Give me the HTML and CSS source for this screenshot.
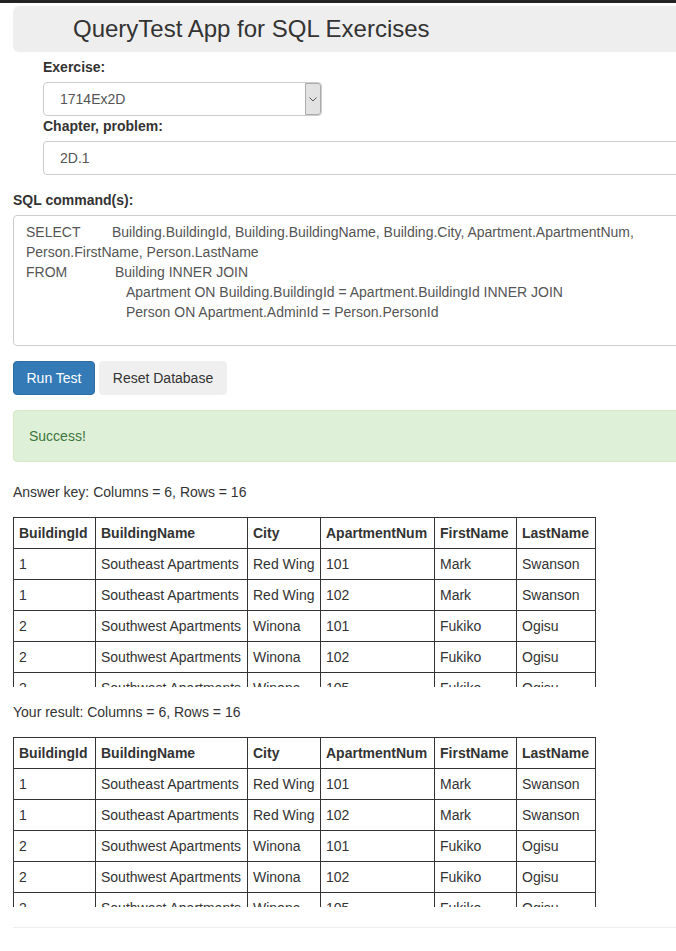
FILE: index.html
```html
<!DOCTYPE html>
<html lang="en">
<head>
<meta charset="utf-8">
<title>QueryTest App for SQL Exercises</title>
<link rel="stylesheet" href="styles.css">
</head>
<body>
<div class="topbar"></div>
<div class="page">
  <div class="header">
    <h1 class="title">QueryTest App for SQL Exercises</h1>
  </div>

  <div class="picker">
    <label class="label">Exercise:</label>
    <div class="select">
      <span class="select-value">1714Ex2D</span>
      <span class="select-arrow">
        <svg width="8" height="5" viewBox="0 0 8 5"><polyline points="0.5,0.5 4,4 7.5,0.5" fill="none" stroke="#555" stroke-width="1"/></svg>
      </span>
    </div>
    <label class="label">Chapter, problem:</label>
    <div class="input">2D.1</div>
  </div>

  <label class="label sql-label">SQL command(s):</label>
  <div class="textarea">
    <div class="sql-line"><span class="kw kw-select">SELECT</span>Building.BuildingId, Building.BuildingName, Building.City, Apartment.ApartmentNum,</div>
    <div class="sql-line">Person.FirstName, Person.LastName</div>
    <div class="sql-line"><span class="kw kw-from">FROM</span>Building INNER JOIN</div>
    <div class="sql-line indent">Apartment ON Building.BuildingId = Apartment.BuildingId INNER JOIN</div>
    <div class="sql-line indent">Person ON Apartment.AdminId = Person.PersonId</div>
  </div>

  <div class="buttons">
    <button class="btn btn-primary">Run Test</button>
    <button class="btn btn-default">Reset Database</button>
  </div>

  <div class="alert">Success!</div>

  <p class="caption caption-first">Answer key: Columns = 6, Rows = 16</p>
  <div class="table-wrap">
    <table class="grid">
      <colgroup>
        <col class="c-id"><col class="c-name"><col class="c-city"><col class="c-apt"><col class="c-first"><col class="c-last">
      </colgroup>
      <thead>
        <tr><th>BuildingId</th><th>BuildingName</th><th>City</th><th>ApartmentNum</th><th>FirstName</th><th>LastName</th></tr>
      </thead>
      <tbody>
        <tr><td>1</td><td>Southeast Apartments</td><td>Red Wing</td><td>101</td><td>Mark</td><td>Swanson</td></tr>
        <tr><td>1</td><td>Southeast Apartments</td><td>Red Wing</td><td>102</td><td>Mark</td><td>Swanson</td></tr>
        <tr><td>2</td><td>Southwest Apartments</td><td>Winona</td><td>101</td><td>Fukiko</td><td>Ogisu</td></tr>
        <tr><td>2</td><td>Southwest Apartments</td><td>Winona</td><td>102</td><td>Fukiko</td><td>Ogisu</td></tr>
        <tr><td>2</td><td>Southwest Apartments</td><td>Winona</td><td>105</td><td>Fukiko</td><td>Ogisu</td></tr>
        <tr><td>2</td><td>Southwest Apartments</td><td>Winona</td><td>106</td><td>Fukiko</td><td>Ogisu</td></tr>
      </tbody>
    </table>
  </div>

  <p class="caption">Your result: Columns = 6, Rows = 16</p>
  <div class="table-wrap">
    <table class="grid">
      <colgroup>
        <col class="c-id"><col class="c-name"><col class="c-city"><col class="c-apt"><col class="c-first"><col class="c-last">
      </colgroup>
      <thead>
        <tr><th>BuildingId</th><th>BuildingName</th><th>City</th><th>ApartmentNum</th><th>FirstName</th><th>LastName</th></tr>
      </thead>
      <tbody>
        <tr><td>1</td><td>Southeast Apartments</td><td>Red Wing</td><td>101</td><td>Mark</td><td>Swanson</td></tr>
        <tr><td>1</td><td>Southeast Apartments</td><td>Red Wing</td><td>102</td><td>Mark</td><td>Swanson</td></tr>
        <tr><td>2</td><td>Southwest Apartments</td><td>Winona</td><td>101</td><td>Fukiko</td><td>Ogisu</td></tr>
        <tr><td>2</td><td>Southwest Apartments</td><td>Winona</td><td>102</td><td>Fukiko</td><td>Ogisu</td></tr>
        <tr><td>2</td><td>Southwest Apartments</td><td>Winona</td><td>105</td><td>Fukiko</td><td>Ogisu</td></tr>
        <tr><td>2</td><td>Southwest Apartments</td><td>Winona</td><td>106</td><td>Fukiko</td><td>Ogisu</td></tr>
      </tbody>
    </table>
  </div>

  <hr class="rule">
</div>
</body>
</html>
```

FILE: styles.css
```css
html, body {
  margin: 0;
  padding: 0;
  overflow: hidden;
  background: #fff;
}
body {
  font-family: "Liberation Sans", Arial, sans-serif;
  font-size: 14px;
  line-height: 20px;
  color: #333;
}
.topbar {
  height: 3px;
  background: #222;
}
.page {
  width: 730px;
  padding-left: 13px;
}
.header {
  margin-top: 3px;
  height: 46px;
  background: #eee;
  border-radius: 6px;
  padding-left: 60px;
}
.title {
  margin: 0;
  font-size: 24px;
  font-weight: normal;
  line-height: 46px;
  color: #333;
}
.picker {
  padding-left: 30px;
  padding-top: 5px;
}
.label {
  display: block;
  font-weight: bold;
  margin-bottom: 5px;
}
.select {
  width: 279px;
  height: 34px;
  box-sizing: border-box;
  border: 1px solid #ccc;
  border-radius: 4px;
  display: flex;
  align-items: stretch;
  color: #555;
}
.select-value {
  flex: 1;
  padding-left: 16px;
  line-height: 32px;
}
.select-arrow {
  width: 16px;
  box-sizing: border-box;
  border: 1px solid #acacac;
  background: #e2e2e2;
  border-radius: 0 3px 3px 0;
  display: flex;
  align-items: center;
  justify-content: center;
}
.input {
  height: 34px;
  box-sizing: border-box;
  border: 1px solid #ccc;
  border-radius: 4px;
  padding-left: 16px;
  line-height: 32px;
  color: #555;
}
.sql-label {
  margin-top: 15px;
}
.textarea {
  height: 131px;
  box-sizing: border-box;
  border: 1px solid #ccc;
  border-radius: 4px;
  padding: 6px 12px;
  color: #555;
}
.sql-line {
  white-space: nowrap;
}
.kw {
  display: inline-block;
}
.kw-select {
  width: 86px;
}
.kw-from {
  width: 89px;
}
.indent {
  padding-left: 100px;
}
.buttons {
  margin-top: 15px;
  display: flex;
  gap: 4px;
}
.btn {
  font-family: inherit;
  font-size: 14px;
  line-height: 20px;
  padding: 6px 12px;
  border-radius: 4px;
  border: 1px solid transparent;
  cursor: pointer;
}
.btn-primary {
  width: 82px;
  background: #337ab7;
  border-color: #2e6da4;
  color: #fff;
}
.btn-default {
  width: 128px;
  background: #efefef;
  border-color: #efefef;
  color: #333;
}
.alert {
  margin-top: 15px;
  padding: 15px;
  background: #dff0d8;
  border: 1px solid #d6e9c6;
  border-radius: 4px;
  color: #3c763d;
}
.caption {
  margin: 15px 0;
}
.caption-first {
  margin-top: 20px;
}
.table-wrap {
  height: 170px;
  overflow: hidden;
}
.grid {
  border-collapse: collapse;
  table-layout: fixed;
  width: 583px;
}
.c-id { width: 82px; }
.c-name { width: 152px; }
.c-city { width: 73px; }
.c-apt { width: 114px; }
.c-first { width: 82px; }
.c-last { width: 79px; }
.grid th,
.grid td {
  border: 1px solid #333;
  padding: 5px;
  text-align: left;
  white-space: nowrap;
  overflow: hidden;
}
.grid th {
  font-weight: bold;
}
.rule {
  margin: 20px 0 0;
  border: 0;
  border-top: 1px solid #eee;
}
```
